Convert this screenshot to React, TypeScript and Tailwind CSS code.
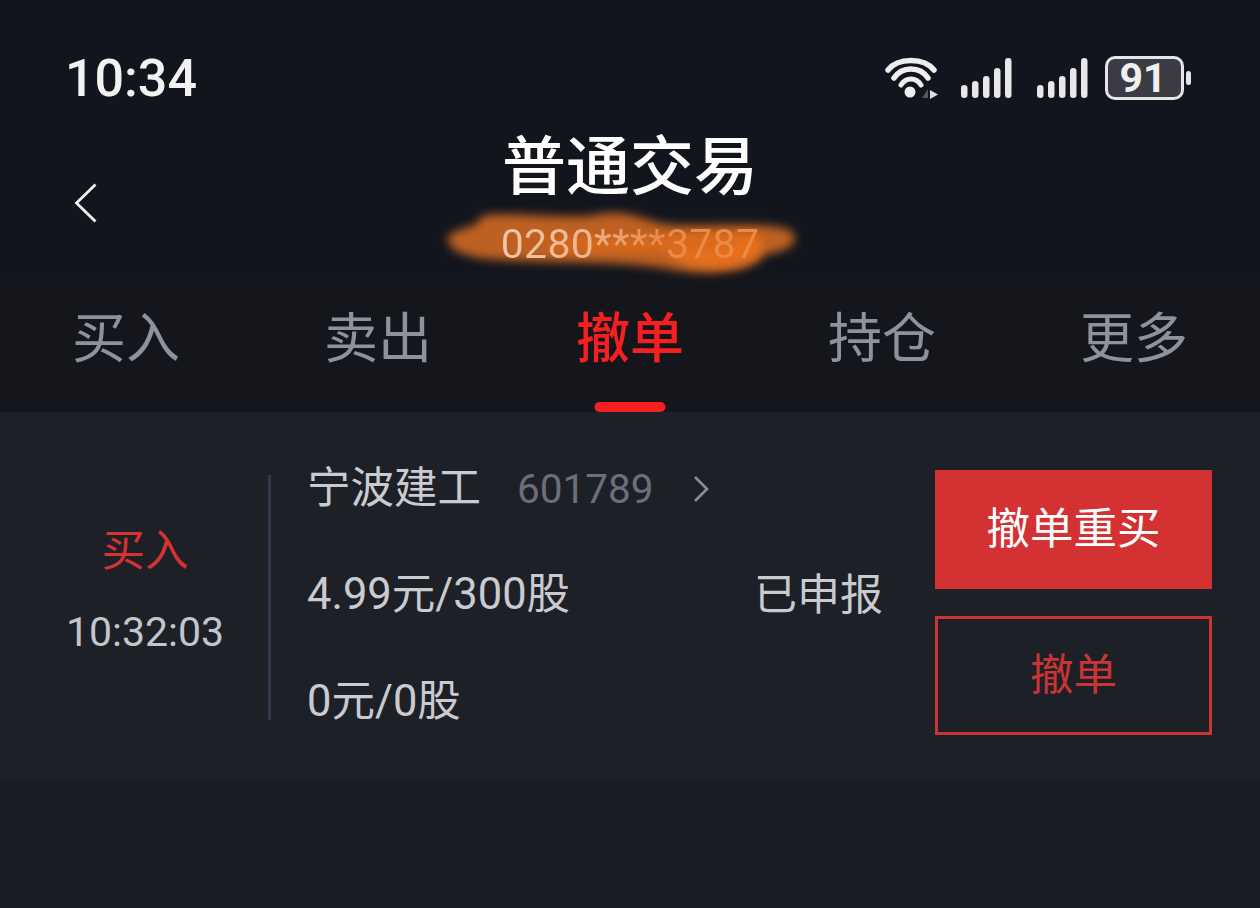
const bars = [13, 17, 22, 30, 40];

function Signal({ className }: { className: string }) {
  return (
    <svg width="51" height="40" viewBox="0 0 51 40" className={className}>
      {bars.map((h, i) => (
        <rect key={i} x={i * 11} y={40 - h} width="6.5" height={h} rx="3.25" fill="#e8e8e8" />
      ))}
    </svg>
  );
}

export default function App() {
  return (
    <div className="w-[1260px] h-[908px] overflow-hidden flex flex-col bg-[#1a1d25] font-['Roboto','Noto_Sans_CJK_SC',sans-serif]">
      {/* Header */}
      <div className="h-[276px] shrink-0 bg-[#12151e] flex flex-col">
        <div className="h-[124px] shrink-0 pl-[65px] pr-[69px] pt-[48px] flex justify-between items-start">
          <span className="text-[52px] leading-[62px] font-medium text-[#f2f2f2] font-['Roboto',sans-serif]">10:34</span>
          <div className="flex items-center pt-[8px]">
            <svg width="60" height="44" viewBox="0 0 60 44" className="mr-[20px]">
              <path d="M7 14 C17 1.3 43 1.3 53 14" fill="none" stroke="#eee" strokeWidth="5.5" strokeLinecap="round" />
              <path d="M13 22 C21 10 39 10 47 22" fill="none" stroke="#eee" strokeWidth="5.5" strokeLinecap="round" />
              <path d="M20 29 C25 21 35 21 40 29" fill="none" stroke="#eee" strokeWidth="5" strokeLinecap="round" />
              <circle cx="29" cy="36" r="5.5" fill="#eee" />
              <path d="M41 42 L47 42 L47 33 Z" fill="#55565c" />
              <path d="M49 34 L57 38.5 L49 43 Z" fill="#ddd" />
            </svg>
            <Signal className="mr-[25px]" />
            <Signal className="mr-[17px]" />
            <div className="w-[79px] h-[44px] rounded-[10px] border-[3px] border-[#e6e6e6] bg-[#3a3b43] flex items-center justify-center">
              <span className="text-[41px] leading-none font-bold text-[#f0f0f0] font-['Roboto',sans-serif] pr-[3px]">91</span>
            </div>
            <div className="w-[5px] h-[14px] ml-[2px] rounded-full bg-[#e6e6e6]" />
          </div>
        </div>
        <div className="relative flex-1 flex flex-col items-center">
          <svg width="24" height="40" viewBox="0 0 24 40" className="absolute left-[74px] top-[59px]">
            <path d="M21.5 1.5 L2.5 20 L21.5 38.5" fill="none" stroke="#f2f2f2" strokeWidth="2.8" />
          </svg>
          <span className="text-[64px] leading-[88px] font-medium text-white">普通交易</span>
          <svg width="364" height="72" viewBox="0 0 364 72" className="absolute left-[440px] top-[82px] overflow-visible">
            <defs>
              <filter id="b" x="-10%" y="-40%" width="120%" height="180%">
                <feGaussianBlur stdDeviation="5" />
              </filter>
            </defs>
            <path
              d="M8 30 C20 20 36 24 42 10 C60 5 110 12 150 10 C185 2 190 10 225 18 C260 22 320 14 350 24 C362 34 350 46 325 48 C315 66 270 70 235 64 C180 54 130 58 60 54 C25 52 6 44 8 30 Z"
              fill="#bd6120"
              filter="url(#b)"
            />
            <path d="M220 36 C250 30 290 28 318 30 C330 40 318 56 290 60 C260 64 232 58 220 36 Z" fill="#e8701e" filter="url(#b)" />
            <path d="M110 34 C170 30 230 32 300 32 C300 44 260 48 110 44 Z" fill="#d8691d" filter="url(#b)" />
          </svg>
          <span className="relative text-[41px] leading-[44px] mt-[10px] tracking-[0.3px] text-transparent bg-clip-text bg-[linear-gradient(90deg,#f3c6a4_0%,#eeb48a_35%,#e88a4c_60%,#ee8a44_100%)] font-['Roboto',sans-serif]">0280****3787</span>
        </div>
      </div>

      {/* Tabs */}
      <div className="h-[136px] shrink-0 bg-[#14161b] grid grid-cols-5">
        {["买入", "卖出", "撤单", "持仓", "更多"].map((t) => {
          const on = t === "撤单";
          return (
            <div key={t} className="relative flex justify-center pt-[28px]">
              <span className={on ? "text-[54px] leading-[72px] font-medium text-[#f61f1f]" : "text-[54px] leading-[72px] text-[#8d929b]"}>{t}</span>
              {on && <div className="absolute bottom-0 left-1/2 -translate-x-1/2 w-[71px] h-[10px] rounded-[5px] bg-[#f61f1f]" />}
            </div>
          );
        })}
      </div>

      {/* Order row */}
      <div className="h-[367px] shrink-0 bg-[#1e2027] flex items-start">
        <div className="w-[268px] shrink-0 h-full flex flex-col items-center pl-[22px] pt-[114px]">
          <span className="text-[43.5px] leading-[52px] text-[#d63232]">买入</span>
          <span className="text-[41px] leading-[50px] mt-[29px] text-[#c3c5ca]">10:32:03</span>
        </div>
        <div className="w-[3px] h-[245px] mt-[63px] shrink-0 bg-[#323a49]" />
        <div className="w-[664px] shrink-0 pl-[36px] pr-[52px] pt-[50px] flex flex-col">
          <div className="flex items-center h-[54px]">
            <span className="text-[43.5px] leading-[54px] text-[#c9cbd0] w-[210px]">宁波建工</span>
            <span className="text-[40.5px] leading-[54px] text-[#6b6f7a]">601789</span>
            <svg width="16" height="28" viewBox="0 0 16 28" className="ml-[39px]">
              <path d="M2 2 L14 14 L2 26" fill="none" stroke="#8a8e98" strokeWidth="2.6" />
            </svg>
          </div>
          <div className="flex items-center h-[54px] mt-[52px] justify-between">
            <span className="text-[43.5px] leading-[54px] text-[#c9cbd0]">4.99元/300股</span>
            <span className="text-[43px] leading-[54px] text-[#c9cbd0]">已申报</span>
          </div>
          <div className="flex items-center h-[54px] mt-[53px]">
            <span className="text-[43.5px] leading-[54px] text-[#c9cbd0]">0元/0股</span>
          </div>
        </div>
        <div className="w-[277px] shrink-0 pt-[58px] flex flex-col gap-[27px]">
          <div className="h-[119px] bg-[#d43232] flex items-center justify-center">
            <span className="text-[43.5px] text-white">撤单重买</span>
          </div>
          <div className="h-[119px] border-[3px] border-[#cb3434] flex items-center justify-center">
            <span className="text-[43.5px] text-[#cb3434]">撤单</span>
          </div>
        </div>
      </div>
      <div className="flex-1 bg-[#1a1d25]" />
    </div>
  );
}
